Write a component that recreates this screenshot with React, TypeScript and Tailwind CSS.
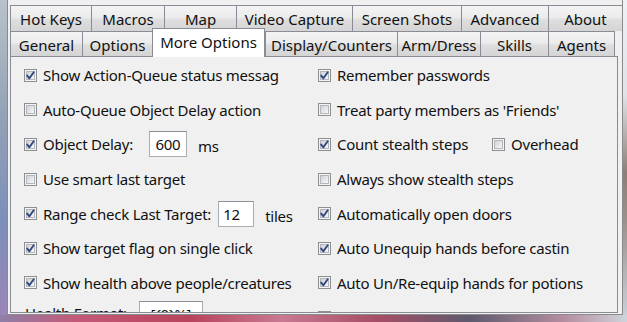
import React from 'react';

type Tab = { label: string; w: string };

const topTabs: Tab[] = [
    { label: 'Hot Keys', w: 'w-[81px]' },
    { label: 'Macros', w: 'w-[73px]' },
    { label: 'Map', w: 'w-[72px]' },
    { label: 'Video Capture', w: 'w-[116px]' },
    { label: 'Screen Shots', w: 'w-[109px]' },
    { label: 'Advanced', w: 'w-[87px]' },
    { label: 'About', w: 'w-[74px]' },
];

const bottomTabs: (Tab & { active?: boolean })[] = [
    { label: 'General', w: 'w-[72px]' },
    { label: 'Options', w: 'w-[70px]' },
    { label: 'More Options', w: 'w-[113px]', active: true },
    { label: 'Display/Counters', w: 'w-[132px]' },
    { label: 'Arm/Dress', w: 'w-[83px]' },
    { label: 'Skills', w: 'w-[68px]' },
    { label: 'Agents', w: 'w-[67px]' },
];

const tabBg = 'bg-[linear-gradient(to_bottom,#f3f3f3_0%,#ececec_45%,#dedede_55%,#d4d4d4_100%)]';

// ── Checkbox (Win7 look) ─────────────────────────────
function Check({ on }: { on?: boolean }) {
    return (
        <span className="flex h-[13px] w-[13px] shrink-0 items-center justify-center border border-[#8e8f8f] bg-[#f4f4f4]">
            <span className="flex h-[9px] w-[9px] items-center justify-center border border-[#b3b7bd] bg-[linear-gradient(135deg,#cfd2d6,#f7f7f7)]">
                {on && (
                    <svg width="11" height="11" viewBox="0 0 11 11" className="shrink-0">
                        <path d="M2.2 5.6 L4.4 8.3 L8.7 2.3" fill="none" stroke="#33477e" strokeWidth="1.9" strokeLinecap="round" strokeLinejoin="round" />
                    </svg>
                )}
            </span>
        </span>
    );
}

function Row({ on, label, children }: { on?: boolean; label: string; children?: React.ReactNode }) {
    return (
        <div className="flex items-center">
            <Check on={on} />
            <span className="ml-[6px] whitespace-nowrap">{label}</span>
            {children}
        </div>
    );
}

function TextBox({ value, className }: { value: string; className: string }) {
    return (
        <span className={`flex h-[26px] items-center border border-[#abadb3] border-t-[#8d9099] bg-white ${className}`}>
            {value}
        </span>
    );
}

export default function App() {
    return (
        <div className="flex h-[322px] w-[627px] flex-col overflow-hidden font-['Noto_Sans',sans-serif] text-[15px] leading-[20px] text-[#111]">
            <div className="flex h-[315px]">
                {/* desktop blur, left */}
                <div className="w-[7px] bg-[linear-gradient(to_bottom,#b9c2c9,#94a3b6_35%,#7d8fba_70%,#9a86b6)]" />

                {/* window */}
                <div className="flex w-[616px] flex-col border-x border-b border-[#8a8a8a] bg-[#f0f0f0] pl-[2px] pt-[5px]">
                    {/* tab row 1 */}
                    <div className="flex h-[26px]">
                        {topTabs.map((t) => (
                            <div key={t.label} className={`${t.w} ${tabBg} flex shrink-0 items-center justify-center border-l border-t border-[#898c95] pt-[1px]`}>
                                {t.label}
                            </div>
                        ))}
                    </div>

                    {/* tab row 2 */}
                    <div className="flex h-[25px] items-end">
                        {bottomTabs.map((t, i) =>
                            t.active ? (
                                <div key={t.label} className={`${t.w} relative z-10 -mb-px flex h-[29px] shrink-0 items-center justify-center border-x border-t border-[#898c95] bg-white pb-[2px]`}>
                                    {t.label}
                                </div>
                            ) : (
                                <div key={t.label} className={`${t.w} ${tabBg} flex h-[25px] shrink-0 items-center justify-center border-l border-t border-[#898c95] pt-[1px] ${i === bottomTabs.length - 1 ? 'border-r' : ''}`}>
                                    {t.label}
                                </div>
                            )
                        )}
                    </div>

                    {/* panel */}
                    <div className="grid h-[257px] w-[608px] grid-cols-[294px_1fr] auto-rows-[34.6px] overflow-hidden border border-[#898c95] bg-[#f0f0f0] pl-[13px] pt-px tracking-[-0.25px]">
                        <Row on label="Show Action-Queue status messag" />
                        <Row on label="Remember passwords" />

                        <Row label="Auto-Queue Object Delay action" />
                        <Row label="Treat party members as 'Friends'" />

                        <Row on label="Object Delay:">
                            <TextBox value="600" className="ml-[16px] w-[38px] justify-center" />
                            <span className="ml-[11px] mt-[4px]">ms</span>
                        </Row>
                        <Row on label="Count stealth steps">
                            <span className="ml-[24px] flex items-center">
                                <Check />
                                <span className="ml-[6px]">Overhead</span>
                            </span>
                        </Row>

                        <Row label="Use smart last target" />
                        <Row label="Always show stealth steps" />

                        <Row on label="Range check Last Target:">
                            <TextBox value="12" className="ml-[7px] w-[36px] pl-[4px]" />
                            <span className="ml-[11px] mt-[4px]">tiles</span>
                        </Row>
                        <Row on label="Automatically open doors" />

                        <Row on label="Show target flag on single click" />
                        <Row on label="Auto Unequip hands before castin" />

                        <Row on label="Show health above people/creatures" />
                        <Row on label="Auto Un/Re-equip hands for potions" />

                        <div className="flex items-start pl-px">
                            <span className="mt-[3px] whitespace-nowrap">Health Format:</span>
                            <TextBox value="[{0}%]" className="ml-[12px] mt-px w-[64px] justify-center" />
                        </div>
                        <Row label="" />
                    </div>
                </div>

                {/* desktop blur, right */}
                <div className="flex-1 bg-[linear-gradient(to_bottom,#eef2f4,#dfe4e8_30%,#8c7e77_55%,#9b918c_70%,#c9d0d8)]" />
            </div>

            {/* desktop blur, bottom */}
            <div className="h-[7px] bg-[linear-gradient(to_right,#8f7fa8,#c35a79_12%,#b8435c_30%,#c77a92_45%,#a64e66_60%,#5e5a6e_75%,#b58ea0_90%,#cfd4dc)]" />
        </div>
    );
}
